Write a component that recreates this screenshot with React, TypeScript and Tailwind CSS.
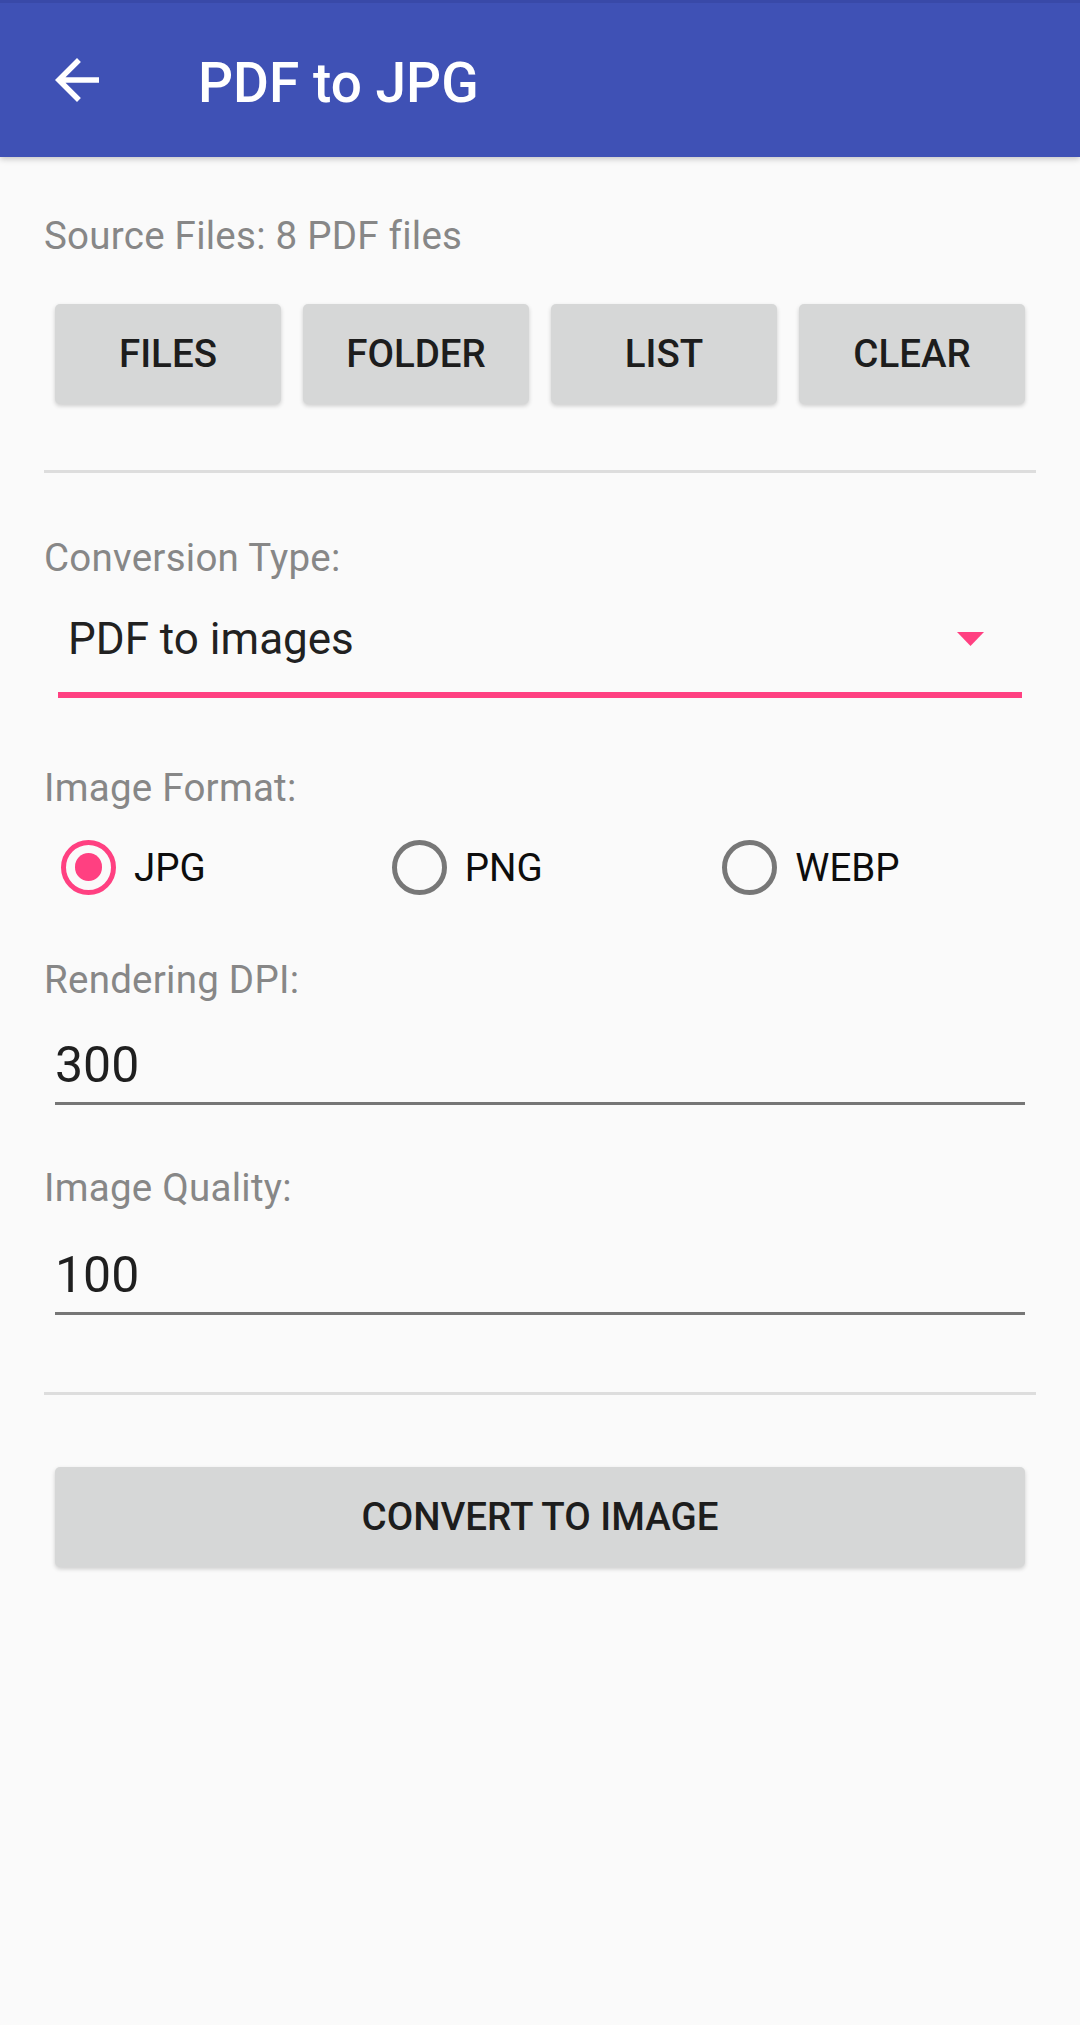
import React from 'react';

function Label({ children, className = '' }: { children: React.ReactNode; className?: string }) {
  return (
    <p className={`text-[38.5px] leading-[45px] tracking-[0.25px] text-[#878787] ${className}`}>{children}</p>
  );
}

function GrayButton({ label }: { label: string }) {
  return (
    <button className="flex-1 h-[100px] flex items-center justify-center rounded-[5px] bg-[#d6d7d7] shadow-[0_2px_4px_rgba(0,0,0,0.18)] text-[38.5px] leading-none font-medium text-[#1d1d1d]">
      {label}
    </button>
  );
}

function Radio({ label, checked }: { label: string; checked?: boolean }) {
  return (
    <div className="flex items-center pl-[17px] gap-[18px]">
      <div
        className={`w-[55px] h-[55px] rounded-full border-[5.5px] flex items-center justify-center ${
          checked ? 'border-[#ff4081]' : 'border-[#777777]'
        }`}
      >
        {checked && <div className="w-[27.5px] h-[27.5px] rounded-full bg-[#ff4081]" />}
      </div>
      <span className="text-[38.5px] leading-[45px] text-[#0d0d0d]">{label}</span>
    </div>
  );
}

function NumberField({ value, className = '' }: { value: string; className?: string }) {
  return (
    <div className={`mx-[11px] ${className}`}>
      <div className="text-[50px] leading-[60px] text-[#1f1f1f]">{value}</div>
      <div className="mt-[7px] h-[3px] bg-[#767676]" />
    </div>
  );
}

export default function App() {
  return (
    <div className="min-h-[2025px] bg-[#fafafa] font-[Roboto,'Liberation_Sans',sans-serif]">
      {/* App bar */}
      <header className="relative z-10 h-[157px] bg-[#3f51b5] shadow-[0_2px_6px_rgba(0,0,0,0.22)]">
        <div className="h-[3px] bg-[#3949a8]" />
        <div className="flex items-start h-[154px]">
          <svg viewBox="0 0 24 24" className="ml-[44px] mt-[44px] w-[66px] h-[66px]" fill="#ffffff">
            <path d="M20 11H7.83l5.59-5.59L12 4l-8 8 8 8 1.41-1.41L7.83 13H20v-2z" />
          </svg>
          <h1 className="ml-[88px] mt-[52.5px] text-[55px] leading-[55px] font-medium text-white">
            PDF to JPG
          </h1>
        </div>
      </header>

      <main className="px-[44px]">
        <Label className="mt-[56px]">Source Files: 8 PDF files</Label>

        <div className="mt-[46px] px-[11px] flex gap-[22px]">
          <GrayButton label="FILES" />
          <GrayButton label="FOLDER" />
          <GrayButton label="LIST" />
          <GrayButton label="CLEAR" />
        </div>

        <div className="mt-[66px] h-[3px] bg-[#dddddd]" />

        <Label className="mt-[62px]">Conversion Type:</Label>

        {/* Spinner */}
        <div className="mt-[33px] mx-[14px]">
          <div className="h-[52px] flex items-center justify-between pl-[10px] pr-[38px]">
            <span className="text-[44px] leading-[52px] text-[#212121]">PDF to images</span>
            <svg width="27" height="14" viewBox="0 0 27 14">
              <polygon points="0,0 27,0 13.5,14" fill="#ff4081" />
            </svg>
          </div>
          <div className="mt-[27px] h-[5.5px] bg-[#ff4081]" />
        </div>

        <Label className="mt-[67px]">Image Format:</Label>

        <div className="mt-[30px] grid grid-cols-3">
          <Radio label="JPG" checked />
          <Radio label="PNG" />
          <Radio label="WEBP" />
        </div>

        <Label className="mt-[62px]">Rendering DPI:</Label>
        <NumberField value="300" className="mt-[33.5px]" />

        <Label className="mt-[60px]">Image Quality:</Label>
        <NumberField value="100" className="mt-[35px]" />

        <div className="mt-[77px] h-[3px] bg-[#dddddd]" />

        <div className="mt-[72px] mx-[11px] flex">
          <GrayButton label="CONVERT TO IMAGE" />
        </div>
      </main>
    </div>
  );
}
